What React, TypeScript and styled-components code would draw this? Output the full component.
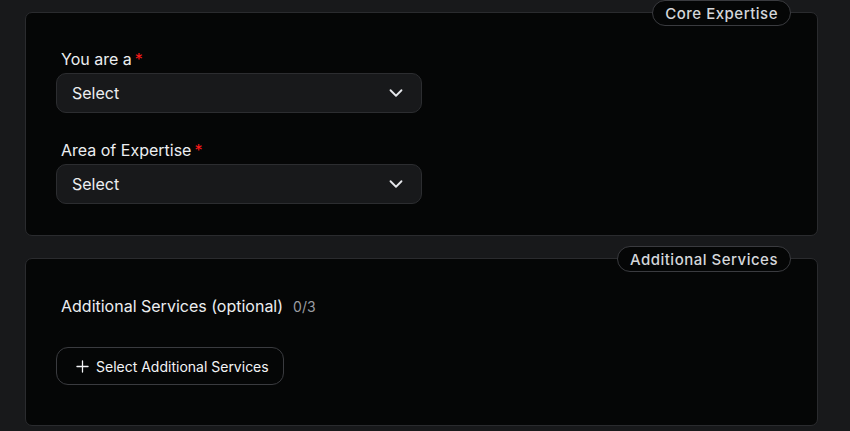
import * as React from 'react';
import styled, { createGlobalStyle } from 'styled-components';
import { ChevronDown, Plus } from 'lucide-react';

const GlobalStyle = createGlobalStyle`
  html, body {
    margin: 0;
    background-color: #18191b;
    font-family: Inter, 'Noto Sans', 'Liberation Sans', sans-serif;
    color: #e5e7eb;
  }
  * {
    box-sizing: border-box;
  }
`;

const Page = styled.div`
  display: flex;
  flex-direction: column;
  gap: 22px;
  padding: 12px 32px 6px 25px;
`;

const Card = styled.section`
  position: relative;
  background-color: #050606;
  border: 1px solid #2a2b2e;
  border-radius: 7px;
  padding: 33px 31px 31px 30px;
  display: flex;
  flex-direction: column;
`;

// pill sitting on the top border of each card
const Badge = styled.div`
  position: absolute;
  top: -13px;
  right: 26px;
  height: 26px;
  padding: 0 12px;
  display: flex;
  align-items: center;
  background-color: #050606;
  border: 1px solid #3a3b3f;
  border-radius: 999px;
  font-size: 15px;
  font-weight: 500;
  letter-spacing: 0.5px;
  color: #d4d6da;
`;

const Field = styled.div`
  display: flex;
  flex-direction: column;
  gap: 3px;
  width: 366px;

  & + & {
    margin-top: 24px;
  }
`;

const Label = styled.label`
  display: flex;
  align-items: center;
  gap: 3px;
  height: 24px;
  padding-left: 5px;
  padding-top: 2px;
  font-size: 16px;
  color: #eceef1;
`;

const Required = styled.span`
  color: #ff1a1a;
  font-size: 16px;
`;

const SelectBox = styled.button`
  height: 40px;
  width: 100%;
  display: flex;
  align-items: center;
  justify-content: space-between;
  padding: 0 14px 0 15px;
  background-color: #18191b;
  border: 1px solid #2c2d30;
  border-radius: 10px;
  font-family: inherit;
  font-size: 16px;
  color: #eceef1;
  cursor: pointer;
`;

const OptionalRow = styled.div`
  display: flex;
  align-items: center;
  gap: 10px;
  height: 24px;
  padding-left: 5px;
  margin-top: 2px;
`;

const OptionalLabel = styled.span`
  font-size: 16px;
  color: #eceef1;
`;

const Counter = styled.span`
  font-size: 14px;
  color: #9a9ca1;
`;

const AddButton = styled.button`
  align-self: flex-start;
  margin-top: 29px;
  margin-bottom: 9px;
  height: 38px;
  display: flex;
  align-items: center;
  gap: 4px;
  padding: 0 14px 0 16px;
  background-color: transparent;
  border: 1px solid #3a3b3f;
  border-radius: 12px;
  font-family: inherit;
  font-size: 14px;
  font-weight: 400;
  color: #f3f4f6;
  cursor: pointer;
`;

const SelectField = ({ label }: { label: string }) => (
  <Field>
    <Label>
      {label}
      <Required>*</Required>
    </Label>
    <SelectBox type="button">
      Select
      <ChevronDown size={22} strokeWidth={2} color="#e5e7eb" />
    </SelectBox>
  </Field>
);

const App = () => {
  return (
    <>
      <GlobalStyle />
      <Page>
        <Card>
          <Badge>Core Expertise</Badge>
          <SelectField label="You are a" />
          <SelectField label="Area of Expertise" />
        </Card>
        <Card>
          <Badge>Additional Services</Badge>
          <OptionalRow>
            <OptionalLabel>Additional Services (optional)</OptionalLabel>
            <Counter>0/3</Counter>
          </OptionalRow>
          <AddButton type="button">
            <Plus size={19} strokeWidth={1.6} />
            Select Additional Services
          </AddButton>
        </Card>
      </Page>
    </>
  );
};

export default App;
